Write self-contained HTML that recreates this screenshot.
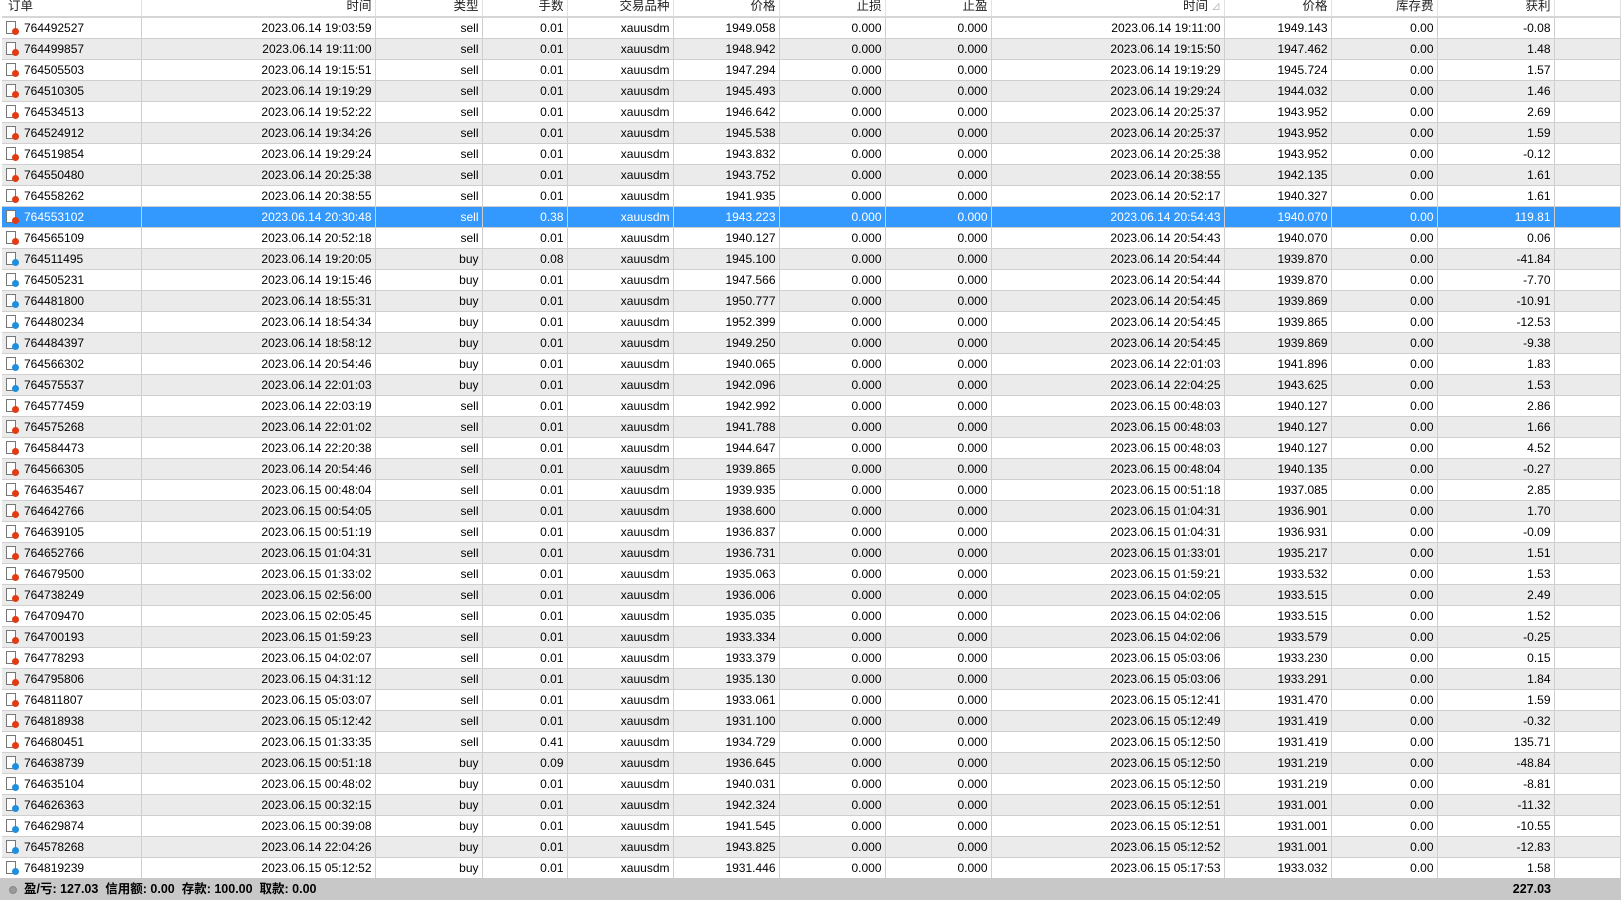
<!DOCTYPE html>
<html><head><meta charset="utf-8"><style>
body{margin:0;width:1621px;height:903px;background:#fff;overflow:hidden;font-family:"Liberation Sans","Noto Sans CJK SC",sans-serif;font-size:12px;color:#000}
table{position:absolute;left:2px;top:0;border-collapse:collapse;table-layout:fixed;width:1619px}
th{height:16px;font-weight:normal;font-size:12.5px;text-align:right;padding:0 3px;border-right:1px solid #e2e2e2;border-bottom:2px solid #d6d6d6;background:#fff;line-height:12px;vertical-align:top;color:#222}
td{height:20px;padding:0 3px;text-align:right;border-right:1px solid #cfcfcf;border-bottom:1px solid #cfcfcf;white-space:nowrap;overflow:hidden}
tr.e td{background:#ebebeb}
tr.s td{background:#3399ff;color:#fff}
td.o{text-align:left;padding-left:22px;position:relative}
td.o i{position:absolute;left:4px;top:3px;width:10px;height:13px;border:1px solid #777;background:#fff;box-sizing:border-box}
td.o b{position:absolute;left:10px;top:10px;width:7px;height:7px;border-radius:50%;background:#e23a12}
td.o.bu b{background:#1e8fe0}
#ft{position:absolute;left:0;top:878px;width:1621px;height:22px;background:#c8c8c8;font-weight:bold;font-size:12.5px;line-height:22px}
#ft span.d{position:absolute;left:9px;top:8px;width:6px;height:6px;border-radius:50%;background:#999;border:1px solid #888}
</style></head><body>
<table>
<colgroup><col style="width:139px"><col style="width:234px"><col style="width:107px"><col style="width:85px"><col style="width:106px"><col style="width:106px"><col style="width:106px"><col style="width:106px"><col style="width:233px"><col style="width:107px"><col style="width:106px"><col style="width:117px"><col></colgroup>
<tr><th style="text-align:left;padding-left:6px">订单</th><th>时间</th><th>类型</th><th>手数</th><th>交易品种</th><th>价格</th><th>止损</th><th>止盈</th><th>时间 <span style="color:#aaa;font-size:9px">⊿</span></th><th>价格</th><th>库存费</th><th>获利</th><th></th></tr>
<tr><td class="o"><i></i><b></b>764492527</td><td>2023.06.14 19:03:59</td><td>sell</td><td>0.01</td><td>xauusdm</td><td>1949.058</td><td>0.000</td><td>0.000</td><td>2023.06.14 19:11:00</td><td>1949.143</td><td>0.00</td><td>-0.08</td><td></td></tr>
<tr class="e"><td class="o"><i></i><b></b>764499857</td><td>2023.06.14 19:11:00</td><td>sell</td><td>0.01</td><td>xauusdm</td><td>1948.942</td><td>0.000</td><td>0.000</td><td>2023.06.14 19:15:50</td><td>1947.462</td><td>0.00</td><td>1.48</td><td></td></tr>
<tr><td class="o"><i></i><b></b>764505503</td><td>2023.06.14 19:15:51</td><td>sell</td><td>0.01</td><td>xauusdm</td><td>1947.294</td><td>0.000</td><td>0.000</td><td>2023.06.14 19:19:29</td><td>1945.724</td><td>0.00</td><td>1.57</td><td></td></tr>
<tr class="e"><td class="o"><i></i><b></b>764510305</td><td>2023.06.14 19:19:29</td><td>sell</td><td>0.01</td><td>xauusdm</td><td>1945.493</td><td>0.000</td><td>0.000</td><td>2023.06.14 19:29:24</td><td>1944.032</td><td>0.00</td><td>1.46</td><td></td></tr>
<tr><td class="o"><i></i><b></b>764534513</td><td>2023.06.14 19:52:22</td><td>sell</td><td>0.01</td><td>xauusdm</td><td>1946.642</td><td>0.000</td><td>0.000</td><td>2023.06.14 20:25:37</td><td>1943.952</td><td>0.00</td><td>2.69</td><td></td></tr>
<tr class="e"><td class="o"><i></i><b></b>764524912</td><td>2023.06.14 19:34:26</td><td>sell</td><td>0.01</td><td>xauusdm</td><td>1945.538</td><td>0.000</td><td>0.000</td><td>2023.06.14 20:25:37</td><td>1943.952</td><td>0.00</td><td>1.59</td><td></td></tr>
<tr><td class="o"><i></i><b></b>764519854</td><td>2023.06.14 19:29:24</td><td>sell</td><td>0.01</td><td>xauusdm</td><td>1943.832</td><td>0.000</td><td>0.000</td><td>2023.06.14 20:25:38</td><td>1943.952</td><td>0.00</td><td>-0.12</td><td></td></tr>
<tr class="e"><td class="o"><i></i><b></b>764550480</td><td>2023.06.14 20:25:38</td><td>sell</td><td>0.01</td><td>xauusdm</td><td>1943.752</td><td>0.000</td><td>0.000</td><td>2023.06.14 20:38:55</td><td>1942.135</td><td>0.00</td><td>1.61</td><td></td></tr>
<tr><td class="o"><i></i><b></b>764558262</td><td>2023.06.14 20:38:55</td><td>sell</td><td>0.01</td><td>xauusdm</td><td>1941.935</td><td>0.000</td><td>0.000</td><td>2023.06.14 20:52:17</td><td>1940.327</td><td>0.00</td><td>1.61</td><td></td></tr>
<tr class="s"><td class="o"><i></i><b></b>764553102</td><td>2023.06.14 20:30:48</td><td>sell</td><td>0.38</td><td>xauusdm</td><td>1943.223</td><td>0.000</td><td>0.000</td><td>2023.06.14 20:54:43</td><td>1940.070</td><td>0.00</td><td>119.81</td><td></td></tr>
<tr><td class="o"><i></i><b></b>764565109</td><td>2023.06.14 20:52:18</td><td>sell</td><td>0.01</td><td>xauusdm</td><td>1940.127</td><td>0.000</td><td>0.000</td><td>2023.06.14 20:54:43</td><td>1940.070</td><td>0.00</td><td>0.06</td><td></td></tr>
<tr class="e"><td class="o bu"><i></i><b></b>764511495</td><td>2023.06.14 19:20:05</td><td>buy</td><td>0.08</td><td>xauusdm</td><td>1945.100</td><td>0.000</td><td>0.000</td><td>2023.06.14 20:54:44</td><td>1939.870</td><td>0.00</td><td>-41.84</td><td></td></tr>
<tr><td class="o bu"><i></i><b></b>764505231</td><td>2023.06.14 19:15:46</td><td>buy</td><td>0.01</td><td>xauusdm</td><td>1947.566</td><td>0.000</td><td>0.000</td><td>2023.06.14 20:54:44</td><td>1939.870</td><td>0.00</td><td>-7.70</td><td></td></tr>
<tr class="e"><td class="o bu"><i></i><b></b>764481800</td><td>2023.06.14 18:55:31</td><td>buy</td><td>0.01</td><td>xauusdm</td><td>1950.777</td><td>0.000</td><td>0.000</td><td>2023.06.14 20:54:45</td><td>1939.869</td><td>0.00</td><td>-10.91</td><td></td></tr>
<tr><td class="o bu"><i></i><b></b>764480234</td><td>2023.06.14 18:54:34</td><td>buy</td><td>0.01</td><td>xauusdm</td><td>1952.399</td><td>0.000</td><td>0.000</td><td>2023.06.14 20:54:45</td><td>1939.865</td><td>0.00</td><td>-12.53</td><td></td></tr>
<tr class="e"><td class="o bu"><i></i><b></b>764484397</td><td>2023.06.14 18:58:12</td><td>buy</td><td>0.01</td><td>xauusdm</td><td>1949.250</td><td>0.000</td><td>0.000</td><td>2023.06.14 20:54:45</td><td>1939.869</td><td>0.00</td><td>-9.38</td><td></td></tr>
<tr><td class="o bu"><i></i><b></b>764566302</td><td>2023.06.14 20:54:46</td><td>buy</td><td>0.01</td><td>xauusdm</td><td>1940.065</td><td>0.000</td><td>0.000</td><td>2023.06.14 22:01:03</td><td>1941.896</td><td>0.00</td><td>1.83</td><td></td></tr>
<tr class="e"><td class="o bu"><i></i><b></b>764575537</td><td>2023.06.14 22:01:03</td><td>buy</td><td>0.01</td><td>xauusdm</td><td>1942.096</td><td>0.000</td><td>0.000</td><td>2023.06.14 22:04:25</td><td>1943.625</td><td>0.00</td><td>1.53</td><td></td></tr>
<tr><td class="o"><i></i><b></b>764577459</td><td>2023.06.14 22:03:19</td><td>sell</td><td>0.01</td><td>xauusdm</td><td>1942.992</td><td>0.000</td><td>0.000</td><td>2023.06.15 00:48:03</td><td>1940.127</td><td>0.00</td><td>2.86</td><td></td></tr>
<tr class="e"><td class="o"><i></i><b></b>764575268</td><td>2023.06.14 22:01:02</td><td>sell</td><td>0.01</td><td>xauusdm</td><td>1941.788</td><td>0.000</td><td>0.000</td><td>2023.06.15 00:48:03</td><td>1940.127</td><td>0.00</td><td>1.66</td><td></td></tr>
<tr><td class="o"><i></i><b></b>764584473</td><td>2023.06.14 22:20:38</td><td>sell</td><td>0.01</td><td>xauusdm</td><td>1944.647</td><td>0.000</td><td>0.000</td><td>2023.06.15 00:48:03</td><td>1940.127</td><td>0.00</td><td>4.52</td><td></td></tr>
<tr class="e"><td class="o"><i></i><b></b>764566305</td><td>2023.06.14 20:54:46</td><td>sell</td><td>0.01</td><td>xauusdm</td><td>1939.865</td><td>0.000</td><td>0.000</td><td>2023.06.15 00:48:04</td><td>1940.135</td><td>0.00</td><td>-0.27</td><td></td></tr>
<tr><td class="o"><i></i><b></b>764635467</td><td>2023.06.15 00:48:04</td><td>sell</td><td>0.01</td><td>xauusdm</td><td>1939.935</td><td>0.000</td><td>0.000</td><td>2023.06.15 00:51:18</td><td>1937.085</td><td>0.00</td><td>2.85</td><td></td></tr>
<tr class="e"><td class="o"><i></i><b></b>764642766</td><td>2023.06.15 00:54:05</td><td>sell</td><td>0.01</td><td>xauusdm</td><td>1938.600</td><td>0.000</td><td>0.000</td><td>2023.06.15 01:04:31</td><td>1936.901</td><td>0.00</td><td>1.70</td><td></td></tr>
<tr><td class="o"><i></i><b></b>764639105</td><td>2023.06.15 00:51:19</td><td>sell</td><td>0.01</td><td>xauusdm</td><td>1936.837</td><td>0.000</td><td>0.000</td><td>2023.06.15 01:04:31</td><td>1936.931</td><td>0.00</td><td>-0.09</td><td></td></tr>
<tr class="e"><td class="o"><i></i><b></b>764652766</td><td>2023.06.15 01:04:31</td><td>sell</td><td>0.01</td><td>xauusdm</td><td>1936.731</td><td>0.000</td><td>0.000</td><td>2023.06.15 01:33:01</td><td>1935.217</td><td>0.00</td><td>1.51</td><td></td></tr>
<tr><td class="o"><i></i><b></b>764679500</td><td>2023.06.15 01:33:02</td><td>sell</td><td>0.01</td><td>xauusdm</td><td>1935.063</td><td>0.000</td><td>0.000</td><td>2023.06.15 01:59:21</td><td>1933.532</td><td>0.00</td><td>1.53</td><td></td></tr>
<tr class="e"><td class="o"><i></i><b></b>764738249</td><td>2023.06.15 02:56:00</td><td>sell</td><td>0.01</td><td>xauusdm</td><td>1936.006</td><td>0.000</td><td>0.000</td><td>2023.06.15 04:02:05</td><td>1933.515</td><td>0.00</td><td>2.49</td><td></td></tr>
<tr><td class="o"><i></i><b></b>764709470</td><td>2023.06.15 02:05:45</td><td>sell</td><td>0.01</td><td>xauusdm</td><td>1935.035</td><td>0.000</td><td>0.000</td><td>2023.06.15 04:02:06</td><td>1933.515</td><td>0.00</td><td>1.52</td><td></td></tr>
<tr class="e"><td class="o"><i></i><b></b>764700193</td><td>2023.06.15 01:59:23</td><td>sell</td><td>0.01</td><td>xauusdm</td><td>1933.334</td><td>0.000</td><td>0.000</td><td>2023.06.15 04:02:06</td><td>1933.579</td><td>0.00</td><td>-0.25</td><td></td></tr>
<tr><td class="o"><i></i><b></b>764778293</td><td>2023.06.15 04:02:07</td><td>sell</td><td>0.01</td><td>xauusdm</td><td>1933.379</td><td>0.000</td><td>0.000</td><td>2023.06.15 05:03:06</td><td>1933.230</td><td>0.00</td><td>0.15</td><td></td></tr>
<tr class="e"><td class="o"><i></i><b></b>764795806</td><td>2023.06.15 04:31:12</td><td>sell</td><td>0.01</td><td>xauusdm</td><td>1935.130</td><td>0.000</td><td>0.000</td><td>2023.06.15 05:03:06</td><td>1933.291</td><td>0.00</td><td>1.84</td><td></td></tr>
<tr><td class="o"><i></i><b></b>764811807</td><td>2023.06.15 05:03:07</td><td>sell</td><td>0.01</td><td>xauusdm</td><td>1933.061</td><td>0.000</td><td>0.000</td><td>2023.06.15 05:12:41</td><td>1931.470</td><td>0.00</td><td>1.59</td><td></td></tr>
<tr class="e"><td class="o"><i></i><b></b>764818938</td><td>2023.06.15 05:12:42</td><td>sell</td><td>0.01</td><td>xauusdm</td><td>1931.100</td><td>0.000</td><td>0.000</td><td>2023.06.15 05:12:49</td><td>1931.419</td><td>0.00</td><td>-0.32</td><td></td></tr>
<tr><td class="o"><i></i><b></b>764680451</td><td>2023.06.15 01:33:35</td><td>sell</td><td>0.41</td><td>xauusdm</td><td>1934.729</td><td>0.000</td><td>0.000</td><td>2023.06.15 05:12:50</td><td>1931.419</td><td>0.00</td><td>135.71</td><td></td></tr>
<tr class="e"><td class="o bu"><i></i><b></b>764638739</td><td>2023.06.15 00:51:18</td><td>buy</td><td>0.09</td><td>xauusdm</td><td>1936.645</td><td>0.000</td><td>0.000</td><td>2023.06.15 05:12:50</td><td>1931.219</td><td>0.00</td><td>-48.84</td><td></td></tr>
<tr><td class="o bu"><i></i><b></b>764635104</td><td>2023.06.15 00:48:02</td><td>buy</td><td>0.01</td><td>xauusdm</td><td>1940.031</td><td>0.000</td><td>0.000</td><td>2023.06.15 05:12:50</td><td>1931.219</td><td>0.00</td><td>-8.81</td><td></td></tr>
<tr class="e"><td class="o bu"><i></i><b></b>764626363</td><td>2023.06.15 00:32:15</td><td>buy</td><td>0.01</td><td>xauusdm</td><td>1942.324</td><td>0.000</td><td>0.000</td><td>2023.06.15 05:12:51</td><td>1931.001</td><td>0.00</td><td>-11.32</td><td></td></tr>
<tr><td class="o bu"><i></i><b></b>764629874</td><td>2023.06.15 00:39:08</td><td>buy</td><td>0.01</td><td>xauusdm</td><td>1941.545</td><td>0.000</td><td>0.000</td><td>2023.06.15 05:12:51</td><td>1931.001</td><td>0.00</td><td>-10.55</td><td></td></tr>
<tr class="e"><td class="o bu"><i></i><b></b>764578268</td><td>2023.06.14 22:04:26</td><td>buy</td><td>0.01</td><td>xauusdm</td><td>1943.825</td><td>0.000</td><td>0.000</td><td>2023.06.15 05:12:52</td><td>1931.001</td><td>0.00</td><td>-12.83</td><td></td></tr>
<tr><td class="o bu"><i></i><b></b>764819239</td><td>2023.06.15 05:12:52</td><td>buy</td><td>0.01</td><td>xauusdm</td><td>1931.446</td><td>0.000</td><td>0.000</td><td>2023.06.15 05:17:53</td><td>1933.032</td><td>0.00</td><td>1.58</td><td></td></tr>
</table>
<div id="ft"><span class="d"></span><span style="position:absolute;left:24px">盈/亏: 127.03&nbsp; 信用额: 0.00&nbsp; 存款: 100.00&nbsp; 取款: 0.00</span><span style="position:absolute;right:70px">227.03</span></div>
</body></html>
